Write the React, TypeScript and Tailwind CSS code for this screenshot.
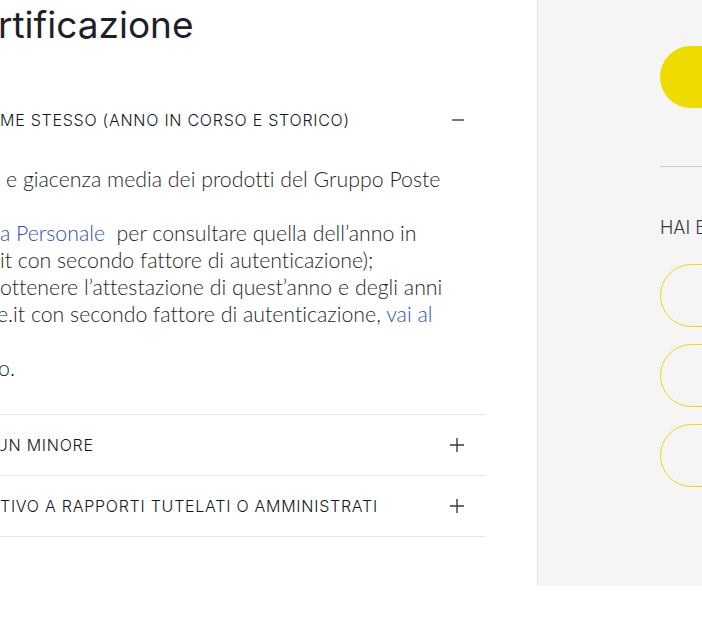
import React from "react";

// Pannello certificazioni: accordion a sinistra, colonna di aiuto a destra.
// La vista è tagliata ai bordi (702px), come nella pagina originale.

const headFont = "font-['Inter','Noto_Sans',sans-serif]";
const bodyFont = "font-['Lato','Noto_Sans',sans-serif]";

const Minus = () => (
  <svg width="14" height="14" viewBox="0 0 14 14" className="shrink-0">
    <path d="M1 7h12" stroke="#3a3a42" strokeWidth="1.4" />
  </svg>
);

const Plus = () => (
  <svg width="16" height="16" viewBox="0 0 16 16" className="shrink-0">
    <path d="M1 8h14M8 1v14" stroke="#3a3a42" strokeWidth="1.4" />
  </svg>
);

type RowProps = { title: string; open?: boolean; shift?: string; children?: React.ReactNode };

const AccordionRow: React.FC<RowProps> = ({ title, open, shift = "", children }) => (
  <div className="border-b border-[#e6e6e6]">
    <div className="h-[60px] flex items-center justify-between pr-[21px]">
      <span className={`${headFont} text-[16px] font-light text-[#141624] tracking-[0.75px] whitespace-nowrap ${shift}`}>
        {title}
      </span>
      {open ? <Minus /> : <Plus />}
    </div>
    {children}
  </div>
);

export default function App() {
  const link = "text-[#2f4fb8]";
  return (
    <div className="w-[702px] h-[617px] overflow-hidden bg-white flex items-start">
      {/* colonna principale */}
      <div className="w-[486px] shrink-0 flex flex-col">
        <h1 className={`${headFont} text-[37px] leading-[44px] font-normal text-[#1d1f2b] whitespace-nowrap -ml-[2px] pt-[3px] h-[90px]`}>
          rtificazione
        </h1>

        <AccordionRow title="ME STESSO (ANNO IN CORSO E STORICO)" open>
          <div className={`${bodyFont} text-[21.3px] leading-[27px] font-light text-[#1f1f2a] whitespace-nowrap [font-variant-ligatures:none] pt-[16px] pb-[32px]`}>
            <div className="pl-[6px]">e giacenza media dei prodotti del Gruppo Poste</div>
            <div>&nbsp;</div>
            <div>
              <span className={link}>a Personale</span>&nbsp; per consultare quella dell’anno in
            </div>
            <div>it con secondo fattore di autenticazione);</div>
            <div>ottenere l’attestazione di quest’anno e degli anni</div>
            <div className="-ml-[3px]">
              e.it con secondo fattore di autenticazione, <span className={link}>vai al</span>
            </div>
            <div>&nbsp;</div>
            <div className="-ml-[2px]">o.</div>
          </div>
        </AccordionRow>

        <AccordionRow title="UN MINORE" shift="-ml-[4px]" />
        <AccordionRow title="TIVO A RAPPORTI TUTELATI O AMMINISTRATI" />
      </div>

      {/* colonna laterale */}
      <aside className="ml-[51px] shrink-0 w-[420px] h-[586px] bg-[#f5f5f5] border-l border-[#e6e6e6] pl-[122px] flex flex-col">
        <div className="mt-[46px] h-[62px] w-[300px] rounded-full bg-[#eedc00]" />
        <div className="mt-[58px] h-px w-[300px] bg-[#cccccc]" />
        <div className={`${headFont} mt-[49px] text-[18px] leading-[24px] font-light text-[#3a3a40] whitespace-nowrap`}>
          HAI BISOGNO DI AIUTO?
        </div>
        <div className="mt-[24px] flex flex-col gap-[17px]">
          <div className="h-[63px] w-[300px] rounded-full border border-[#eedc00]" />
          <div className="h-[63px] w-[300px] rounded-full border border-[#eedc00]" />
          <div className="h-[63px] w-[300px] rounded-full border border-[#eedc00]" />
        </div>
      </aside>
    </div>
  );
}
